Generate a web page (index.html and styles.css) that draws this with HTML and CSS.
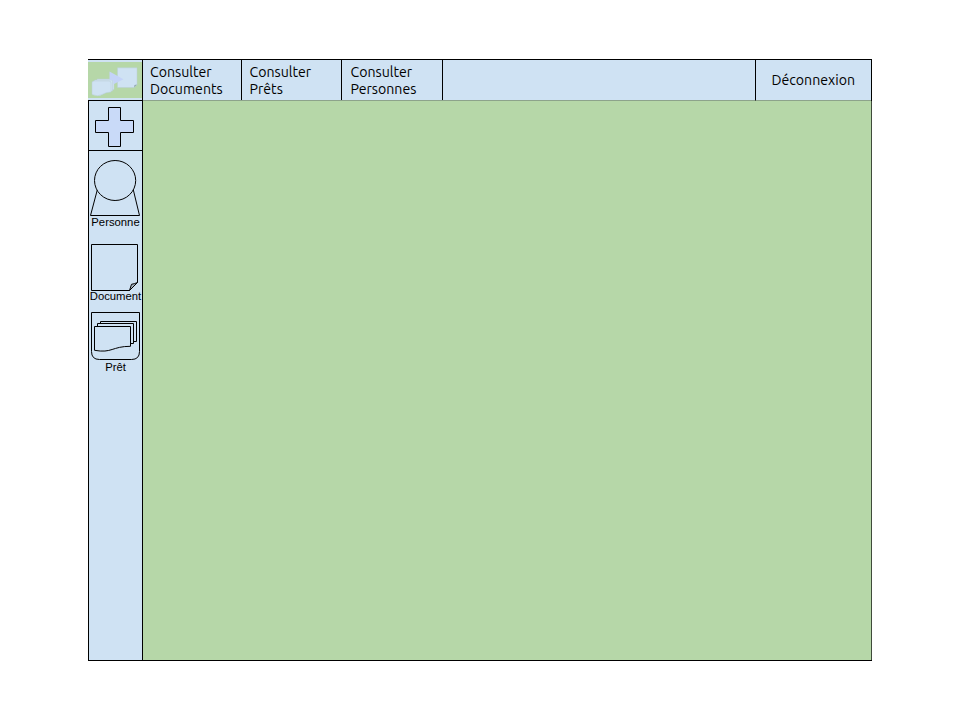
FILE: index.html
```html
<!DOCTYPE html>
<html lang="fr">
<head>
<meta charset="utf-8">
<title>Consultation</title>
<link rel="stylesheet" href="styles.css">
</head>
<body>
<div class="app">
  <header class="topbar">
    <div class="logo">
      <svg width="54" height="36" viewBox="88 62 54 36">
        <g fill="#cfe2f3" stroke="#b9cfd6" stroke-width=".5">
          <path d="M97 79H114V89.500Q109 89.500 105 92.500T97 92.500Z"/>
          <path d="M94.500 80H112.500V91Q107 91 103 94T94.500 94Z"/>
          <path d="M92 82.500Q92 81 94 81H109Q111 81 111 83V92Q106 92 102 94.500T92 94.500Z"/>
          <path d="M117.500 67.800H137V84.500L134 87.500H117.500Z"/>
        </g>
        <path d="M134 87.500L134.500 85L137 84.500Z" fill="#8fa3ae"/>
        <path d="M109.500 71.500L123.500 79.300L113.500 84.300V80.800L109.500 79.500Z" fill="#c4d3f8"/>
      </svg>
    </div>
    <nav class="tabs">
      <a class="tab tab-docs"><span>Consulter</span><span>Documents</span></a>
      <a class="tab tab-loans"><span>Consulter</span><span>Prêts</span></a>
      <a class="tab tab-people"><span>Consulter</span><span>Personnes</span></a>
    </nav>
    <a class="logout">Déconnexion</a>
  </header>
  <div class="body">
    <aside class="sidebar">
      <div class="add">
        <svg width="53" height="49" viewBox="89 101 53 49"><path d="M108.500 107.500H120.500V120.500H133.500V132.500H120.500V146.500H108.500V132.500H95.500V120.500H108.500Z" fill="#c9daf8" stroke="#000"/></svg>
      </div>
      <div class="item person">
        <svg width="53" height="65" viewBox="89 151 53 65"><g fill="#cfe2f3" stroke="#000"><path d="M98.200 186.500H132.500L139.500 215.500H90.500Z"/><ellipse cx="115.100" cy="180.500" rx="20.600" ry="20"/></g></svg>
        <span>Personne</span>
      </div>
      <div class="item document">
        <svg width="53" height="48" viewBox="89 244 53 48"><path d="M91.500 244.500H137.500V282.500L129.500 290.500H91.500Z" fill="none" stroke="#000"/><path d="M129.500 290.500L131.500 284.300Q134 284 137.500 282.500Z" fill="#a6b5c2" stroke="#000"/></svg>
        <span>Document</span>
      </div>
      <div class="item loan">
        <svg width="53" height="49" viewBox="89 312 53 49"><g fill="#cfe2f3" stroke="#000"><path d="M91.500 312.500H139.500V351.500Q139.500 359.500 131.500 359.500H99.500Q91.500 359.500 91.500 351.500Z"/><path d="M100.500 321.500H136.500V341.500H100.500Z"/><path d="M97.500 323.500H133.500V343.500H97.500Z"/><path d="M94.500 326.500H130.500V346.300C112 346.300 112 353.500 94.500 350.300Z"/></g></svg>
        <span>Prêt</span>
      </div>
    </aside>
    <main class="content"></main>
  </div>
</div>
</body>
</html>
```
FILE: styles.css
```css
* { box-sizing: border-box; }

body {
  margin: 0;
  padding: 59px 88px;
  background: #fff;
  color: #000;
}

.app {
  display: flex;
  flex-direction: column;
  width: 784px;
  height: 602px;
  border-top: 1px solid #000;
  border-bottom: 1px solid #000;
}

.topbar {
  display: flex;
  height: 41px;
  background: #cfe2f3;
  border-right: 1px solid #000;
  font: 14.15px/17px Ubuntu, "Noto Sans", sans-serif;
}

.logo {
  width: 55px;
  padding-top: 2px;
  border-right: 1px solid #000;
  border-bottom: 1px solid #000;
}

.logo svg {
  display: block;
  background: #b6d7a8;
}

.tabs {
  display: flex;
  flex: 1;
  border-bottom: 1px solid #8da38b;
}

.tab {
  display: flex;
  flex-direction: column;
  padding: 4px 0 0 7px;
  border-right: 1px solid #000;
  white-space: nowrap;
}

.tab-docs { width: 99px; }
.tab-loans { width: 100px; padding-left: 7.5px; }
.tab-people { width: 101px; padding-left: 8.5px; }

.logout {
  width: 116px;
  padding: 12px 0 0 15.5px;
  border-left: 1px solid #000;
  border-bottom: 1px solid #8da38b;
}

.body {
  display: flex;
  flex: 1;
}

.sidebar {
  width: 55px;
  background: #cfe2f3;
  border-left: 1px solid #000;
  border-right: 1px solid #000;
  font: 11.3px/12px "Liberation Sans", Arial, sans-serif;
}

.sidebar svg { display: block; }

.add {
  height: 50px;
  border-bottom: 1px solid #000;
}

.item {
  display: flex;
  flex-direction: column;
  align-items: center;
  white-space: nowrap;
}

.person { height: 93px; }
.document { height: 68px; }
.document span { margin-top: -2px; }

.content {
  flex: 1;
  background: #b6d7a8;
  border-right: 1px solid #3f4b3a;
}
```
